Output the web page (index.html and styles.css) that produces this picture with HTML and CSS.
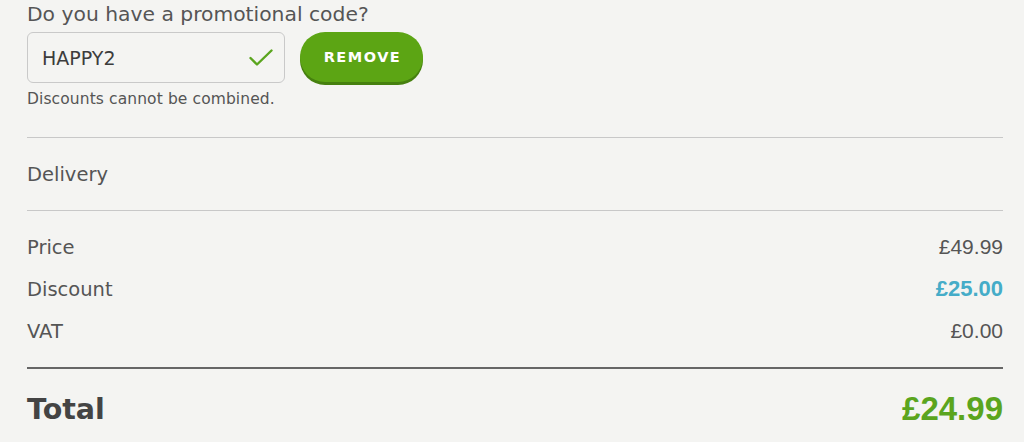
FILE: index.html
```html
<!DOCTYPE html>
<html lang="en">
<head>
    <meta charset="UTF-8">
    <meta name="viewport" content="width=device-width, initial-scale=1.0">
    <title>Basket summary</title>
    <link rel="stylesheet" href="styles.css">
</head>
<body>

    <div class="summary">
        <div class="promo">
            <label class="promo-label" for="promo-code">Do you have a promotional code?</label>
            <div class="promo-row">
                <div class="promo-input">
                    <span id="promo-code">HAPPY2</span>
                    <svg class="promo-check" width="24" height="18" viewBox="0 0 24 18">
                        <polyline points="1.5,9 8,15.5 22.5,1.5" fill="none" stroke="#5aa51e" stroke-width="2.4" stroke-linecap="round" stroke-linejoin="round"/>
                    </svg>
                </div>
                <button class="btn-remove" type="button">REMOVE</button>
            </div>
            <p class="promo-note">Discounts cannot be combined.</p>
        </div>

        <div class="delivery">Delivery</div>

        <ul class="costs">
            <li><span>Price</span><span class="amount">£49.99</span></li>
            <li><span>Discount</span><span class="amount amount-discount">£25.00</span></li>
            <li><span>VAT</span><span class="amount">£0.00</span></li>
        </ul>

        <div class="total">
            <span class="total-label">Total</span>
            <span class="total-amount">£24.99</span>
        </div>
    </div>

</body>
</html>
```

FILE: styles.css
```css
*{box-sizing: border-box;}
ul{list-style: none;margin:0;padding:0;}
body{
    margin:0;
    background:#f4f4f2;
    font-family:"DejaVu Sans", sans-serif;
    color:#555;
}

.summary{
    padding:0 21px 0 27px;
}

/* promo code */
.promo-label{
    display:block;
    font-size:20.3px;
    line-height:26px;
    padding-top:1px;
}
.promo-row{
    display:flex;
    align-items:flex-start;
    gap:15px;
    margin-top:5px;
}
.promo-input{
    width:258px;
    height:51px;
    border:1px solid #c9c9c9;
    border-radius:6px;
    display:flex;
    align-items:center;
    justify-content:space-between;
    padding:0 11px 0 14px;
    font-size:19px;
    color:#3c3c3c;
}
.promo-check{
    display:block;
    margin-top:1px;
}
.btn-remove{
    width:123px;
    height:50px;
    border:0;
    border-radius:25px;
    background:#5ca514;
    box-shadow:0 3px 0 #46800f;
    color:#fff;
    font-family:"DejaVu Sans", sans-serif;
    font-weight:bold;
    font-size:14.5px;
    letter-spacing:1.5px;
    padding:0 0 0 2px;
}
.promo-note{
    margin:6px 0 28px;
    font-size:15.5px;
    line-height:20px;
    letter-spacing:0.1px;
}

/* delivery */
.delivery{
    height:74px;
    border-top:1px solid #c8c8c8;
    border-bottom:1px solid #c8c8c8;
    display:flex;
    align-items:center;
    font-size:19.5px;
}

/* costs */
.costs{
    padding:15px 0;
}
.costs>li{
    height:42px;
    display:flex;
    justify-content:space-between;
    align-items:center;
    font-size:19.5px;
}
.amount{
    font-family:"Liberation Sans", Arial, sans-serif;
    font-size:21px;
    color:#555;
}
.amount-discount{
    font-weight:bold;
    font-size:22px;
    color:#45acc8;
}

/* total */
.total{
    height:82px;
    border-top:2px solid #666;
    display:flex;
    justify-content:space-between;
    align-items:center;
}
.total-label{
    font-weight:bold;
    font-size:28.5px;
    color:#444;
}
.total-amount{
    font-family:"Liberation Sans", Arial, sans-serif;
    font-weight:bold;
    font-size:33px;
    color:#5ba51e;
}
```
